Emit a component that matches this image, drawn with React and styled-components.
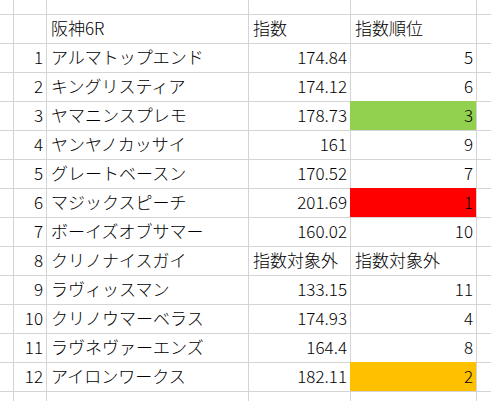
import React from "react";
import styled, { createGlobalStyle } from "styled-components";

const GlobalStyle = createGlobalStyle`
  html, body {
    margin: 0;
    padding: 0;
    background: #fff;
    overflow: hidden;
  }
`;

const Sheet = styled.div`
  display: grid;
  grid-template-columns: 13px 33px 202px 102px 126px 1fr;
  grid-template-rows: 14px repeat(13, 29px) 20px;
  width: 491px;
  height: 401px;
  font-family: "Noto Sans CJK JP", "Noto Sans", sans-serif;
  font-size: 17px;
  font-weight: 300;
  color: #000;
`;

const Cell = styled.div`
  box-sizing: border-box;
  border-left: ${(p) => (p.$firstCol ? "none" : "1px solid #d4d4d4")};
  border-top: ${(p) => (p.$firstRow ? "none" : "1px solid #d4d4d4")};
  border-color: ${(p) => p.$fill || "#d4d4d4"};
  background: ${(p) => p.$fill || "transparent"};
  text-align: ${(p) => p.$align || "left"};
  padding: 0 ${(p) => (p.$align === "right" ? "3px" : "0")} 0
    ${(p) => (p.$align === "right" ? "0" : "4px")};
  line-height: 26px;
  white-space: nowrap;
  overflow: hidden;
`;

const header = ["", "阪神6R", "指数", "指数順位"];

const horses = [
  ["アルマトップエンド", "174.84", "5"],
  ["キングリスティア", "174.12", "6"],
  ["ヤマニンスプレモ", "178.73", "3", "#92d050"],
  ["ヤンヤノカッサイ", "161", "9"],
  ["グレートベースン", "170.52", "7"],
  ["マジックスピーチ", "201.69", "1", "#ff0000"],
  ["ボーイズオブサマー", "160.02", "10"],
  ["クリノナイスガイ", "指数対象外", "指数対象外"],
  ["ラヴィッスマン", "133.15", "11"],
  ["クリノウマーベラス", "174.93", "4"],
  ["ラヴネヴァーエンズ", "164.4", "8"],
  ["アイロンワークス", "182.11", "2", "#ffc000"],
];

const isNum = (v) => /^[0-9.]+$/.test(v);

export default function App() {
  const rows = [];
  // partial top row
  rows.push(
    <React.Fragment key="top">
      {[0, 1, 2, 3, 4, 5].map((c) => (
        <Cell key={c} $firstRow $firstCol={c === 0} />
      ))}
    </React.Fragment>
  );
  rows.push(
    <React.Fragment key="head">
      <Cell $firstCol />
      {header.map((h, i) => (
        <Cell key={i}>{h}</Cell>
      ))}
      <Cell />
    </React.Fragment>
  );
  horses.forEach(([name, score, rank, fill], i) => {
    rows.push(
      <React.Fragment key={name}>
        <Cell $firstCol />
        <Cell $align="right">{i + 1}</Cell>
        <Cell>{name}</Cell>
        <Cell $align={isNum(score) ? "right" : "left"}>{score}</Cell>
        <Cell $align={isNum(rank) ? "right" : "left"} $fill={fill}>
          {rank}
        </Cell>
        <Cell />
      </React.Fragment>
    );
  });
  rows.push(
    <React.Fragment key="bottom">
      {[0, 1, 2, 3, 4, 5].map((c) => (
        <Cell key={c} $firstCol={c === 0} />
      ))}
    </React.Fragment>
  );

  return (
    <>
      <GlobalStyle />
      <Sheet>{rows}</Sheet>
    </>
  );
}
